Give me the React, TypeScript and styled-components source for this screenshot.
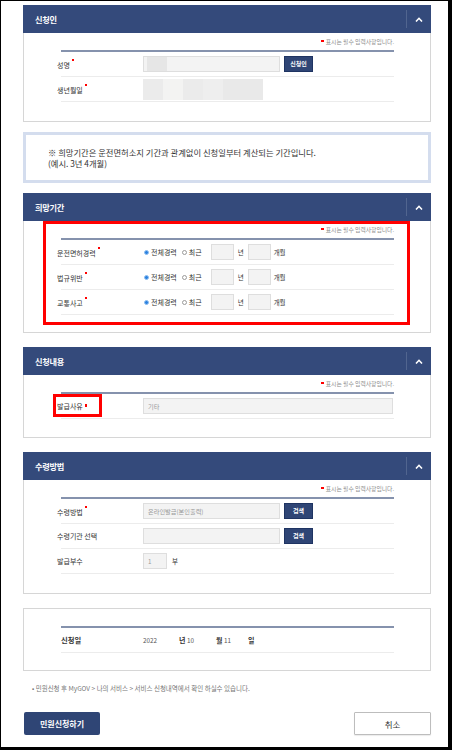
import styled, { createGlobalStyle } from "styled-components";

const GlobalStyle = createGlobalStyle`
  html, body {
    margin: 0;
    padding: 0;
    background: #fff;
  }
  body {
    font-family: "Noto Sans CJK KR", "Noto Sans", sans-serif;
    color: #333;
  }
`;

export default function App() {
  return (
    <>
      <GlobalStyle />
      <Frame>
        <Panel>
          <PanelHeader title="신청인" />
          <PanelBody $pb={19}>
            <RequiredNote>표시는 필수 입력사항입니다.</RequiredNote>
            <Table>
              <Row>
                <Label $required>성명</Label>
                <NameInput />
                <NavyButton>신청인</NavyButton>
              </Row>
              <Row>
                <Label $required>생년월일</Label>
                <BlurBlock />
              </Row>
            </Table>
          </PanelBody>
        </Panel>

        <Notice>
          ※ 희망기간은 운전면허소지 기간과 관계없이 신청일부터 계산되는 기간입니다.
          <br />
          (예시. 3년 4개월)
        </Notice>

        <Panel $mt={10}>
          <PanelHeader title="희망기간" />
          <PanelBody $pb={7} $flush>
            <Highlight>
              <RequiredNote>표시는 필수 입력사항입니다.</RequiredNote>
              <Table>
                {["운전면허경력", "법규위반", "교통사고"].map((name) => (
                  <Row key={name}>
                    <Label $required>{name}</Label>
                    <PeriodPicker />
                  </Row>
                ))}
              </Table>
            </Highlight>
          </PanelBody>
        </Panel>

        <Panel $mt={14}>
          <PanelHeader title="신청내용" />
          <PanelBody $pb={18}>
            <RequiredNote>표시는 필수 입력사항입니다.</RequiredNote>
            <Table>
              <Row>
                <BoxedLabel $required>발급사유</BoxedLabel>
                <Input $w={250}>기타</Input>
              </Row>
            </Table>
          </PanelBody>
        </Panel>

        <Panel $mt={14}>
          <PanelHeader title="수령방법" />
          <PanelBody $pb={19}>
            <RequiredNote>표시는 필수 입력사항입니다.</RequiredNote>
            <Table>
              <Row>
                <Label $required>수령방법</Label>
                <Input $w={137}>온라인발급(본인출력)</Input>
                <NavyButton>검색</NavyButton>
              </Row>
              <Row>
                <Label>수령기관 선택</Label>
                <Input $w={137} />
                <NavyButton>검색</NavyButton>
              </Row>
              <Row>
                <Label>발급부수</Label>
                <Input $w={24}>1</Input>
                <Unit $ml={5}>부</Unit>
              </Row>
            </Table>
          </PanelBody>
        </Panel>

        <Panel $mt={14}>
          <PanelBody $pb={17} $pt={17}>
            <Table>
              <Row>
                <DateLabel>신청일</DateLabel>
                <DateValue $w={36}>2022</DateValue>
                <DateUnit $w={8}>년</DateUnit>
                <DateValue $w={29}>10</DateValue>
                <DateUnit $w={8}>월</DateUnit>
                <DateValue $w={24}>11</DateValue>
                <DateUnit $w={8}>일</DateUnit>
              </Row>
            </Table>
          </PanelBody>
        </Panel>

        <FooterNote>
          • 민원신청 후 MyGOV &gt; 나의 서비스 &gt; 서비스 신청내역에서 확인 하실수 있습니다.
        </FooterNote>

        <Actions>
          <PrimaryButton>민원신청하기</PrimaryButton>
          <CancelButton>취소</CancelButton>
        </Actions>
      </Frame>
    </>
  );
}

function PanelHeader({ title }: { title: string }) {
  return (
    <Header>
      <HeaderTitle>{title}</HeaderTitle>
      <Toggle>
        <svg width="8" height="5" viewBox="0 0 8 5">
          <polyline
            points="1,4.5 4,1.3 7,4.5"
            fill="none"
            stroke="#fff"
            strokeWidth="1.6"
          />
        </svg>
      </Toggle>
    </Header>
  );
}

function PeriodPicker() {
  return (
    <>
      <RadioOption>
        <Radio $checked />
        전체경력
      </RadioOption>
      <RadioOption $ml={5}>
        <Radio />
        최근
      </RadioOption>
      <Input $w={23} $ml={9} />
      <Unit $ml={4}>년</Unit>
      <Input $w={23} $ml={4} />
      <Unit $ml={3}>개월</Unit>
    </>
  );
}

const Frame = styled.div`
  box-sizing: border-box;
  width: 452px;
  height: 750px;
  border-left: 1px solid #000;
  border-top: 1px solid #000;
  border-right: 4px solid #000;
  border-bottom: 3px solid #000;
  padding: 4px 17px 0 22px;
  overflow: hidden;
`;

const Panel = styled.section<{ $mt?: number }>`
  margin-top: ${(p) => p.$mt ?? 0}px;
  border: 1px solid #d6d6d6;
  background: #fff;
`;

const Header = styled.header`
  margin: -1px -1px 0;
  height: 28px;
  background: #344a7b;
  display: flex;
  align-items: center;
  padding-left: 12px;
`;

const HeaderTitle = styled.h2`
  margin: 0;
  font-size: 8.2px;
  font-weight: 700;
  color: #fff;
  letter-spacing: -0.3px;
`;

const Toggle = styled.div`
  margin-left: auto;
  width: 24px;
  height: 18px;
  border-left: 1px solid #51658f;
  display: flex;
  align-items: center;
  justify-content: center;
`;

const PanelBody = styled.div<{ $pb: number; $pt?: number; $flush?: boolean }>`
  padding: ${(p) => (p.$flush ? 0 : p.$pt ?? 3)}px
    ${(p) => (p.$flush ? 0 : 36)}px ${(p) => p.$pb}px
    ${(p) => (p.$flush ? 0 : 37)}px;
`;

const Highlight = styled.div`
  border: 3px solid #ff0000;
  margin: 0 20px 0 19px;
  padding: 0 13px 7px 15px;
`;

const RequiredNote = styled.div`
  height: 12px;
  line-height: 12px;
  margin-bottom: 2px;
  text-align: right;
  font-size: 5.8px;
  color: #8a8a8a;
  white-space: nowrap;

  &::before {
    content: "";
    display: inline-block;
    width: 2.5px;
    height: 2.5px;
    background: #ff0000;
    margin-right: 2px;
    vertical-align: 2px;
  }
`;

const Table = styled.div`
  border-top: 2px solid #8592ad;
`;

const Row = styled.div`
  display: flex;
  align-items: center;
  height: 24px;
  border-bottom: 1px solid #ececec;
  font-size: 7px;
`;

const Label = styled.div<{ $required?: boolean }>`
  flex: none;
  width: 86px;
  margin-left: -4px;
  font-size: 7px;
  color: #333;
  white-space: nowrap;

  ${(p) =>
    p.$required &&
    `
    &::after {
      content: "";
      display: inline-block;
      width: 2.5px;
      height: 2.5px;
      background: #ff0000;
      margin-left: 2px;
      vertical-align: 6px;
    }
  `}
`;

const BoxedLabel = styled(Label)`
  box-sizing: border-box;
  width: 49px;
  height: 23px;
  margin-left: -8px;
  margin-right: 41px;
  padding-left: 1px;
  border: 3px solid #ff0000;
  display: flex;
  align-items: center;
  align-self: flex-start;
`;

const DateLabel = styled.div`
  flex: none;
  width: 82px;
  font-size: 7.3px;
  font-weight: 700;
  color: #333;
`;

const DateValue = styled.span<{ $w: number }>`
  width: ${(p) => p.$w}px;
  flex: none;
  font-size: 6.3px;
  color: #555;
`;

const DateUnit = styled.span<{ $w: number }>`
  width: ${(p) => p.$w}px;
  flex: none;
  font-size: 7px;
  font-weight: 700;
  color: #333;
`;

const Input = styled.div<{ $w: number; $ml?: number }>`
  box-sizing: border-box;
  flex: none;
  width: ${(p) => p.$w}px;
  height: 16px;
  margin-left: ${(p) => p.$ml ?? 0}px;
  background: #f3f3f3;
  border: 1px solid #dedede;
  padding-left: 4px;
  display: flex;
  align-items: center;
  font-size: 6.2px;
  color: #999;
  white-space: nowrap;
`;

const NameInput = styled(Input).attrs({ $w: 137 })`
  background: linear-gradient(
    to right,
    #f3f3f3 0 3px,
    #e6e6e6 3px 23px,
    #f3f3f3 23px
  );
`;

const BlurBlock = styled.div`
  width: 120px;
  height: 21px;
  background: linear-gradient(
    to right,
    #ebebeb 0 20px,
    #f3f3f2 20px 40px,
    #ebebeb 40px 60px,
    #eeeeee 60px 80px,
    #e9e9e9 80px 120px
  );
`;

const NavyButton = styled.button`
  flex: none;
  width: 29px;
  height: 16px;
  margin-left: 4px;
  padding: 0;
  background: #2f4575;
  border: 1px solid #1f3462;
  color: #fff;
  font-family: inherit;
  font-size: 6px;
  font-weight: 700;
  line-height: 1;
`;

const RadioOption = styled.label<{ $ml?: number }>`
  display: inline-flex;
  align-items: center;
  gap: 2px;
  margin-left: ${(p) => p.$ml ?? 1}px;
  font-size: 7px;
  color: #333;
  white-space: nowrap;
`;

const Radio = styled.span<{ $checked?: boolean }>`
  box-sizing: border-box;
  width: 5px;
  height: 5px;
  border-radius: 50%;
  border: 1px solid ${(p) => (p.$checked ? "#8fbff0" : "#9a9a9a")};
  background: ${(p) => (p.$checked ? "#2d82e0" : "#fff")};
`;

const Unit = styled.span<{ $ml?: number }>`
  margin-left: ${(p) => p.$ml ?? 0}px;
  font-size: 6.5px;
  color: #333;
  white-space: nowrap;
`;

const Notice = styled.div`
  margin-top: 10px;
  border: 3px solid #d4ddee;
  padding: 12px 10px 11px 22px;
  font-size: 8.3px;
  line-height: 11px;
  color: #333;
`;

const FooterNote = styled.p`
  margin: 12px 0 0;
  padding-left: 9px;
  font-size: 6.5px;
  line-height: 10px;
  color: #777;
  white-space: nowrap;
`;

const Actions = styled.div`
  margin-top: 19px;
  padding-left: 1px;
  display: flex;
  justify-content: space-between;
`;

const PrimaryButton = styled.button`
  width: 76px;
  height: 23px;
  padding: 0;
  border: none;
  border-radius: 2px;
  background: #2f4575;
  color: #fff;
  font-family: inherit;
  font-size: 8px;
  font-weight: 700;
`;

const CancelButton = styled.button`
  width: 77px;
  height: 23px;
  padding: 0;
  border: 1px solid #bdbdbd;
  border-radius: 1px;
  background: #fff;
  color: #333;
  font-family: inherit;
  font-size: 8.5px;
  box-shadow: 0 1px 1px rgba(0, 0, 0, 0.08);
`;
